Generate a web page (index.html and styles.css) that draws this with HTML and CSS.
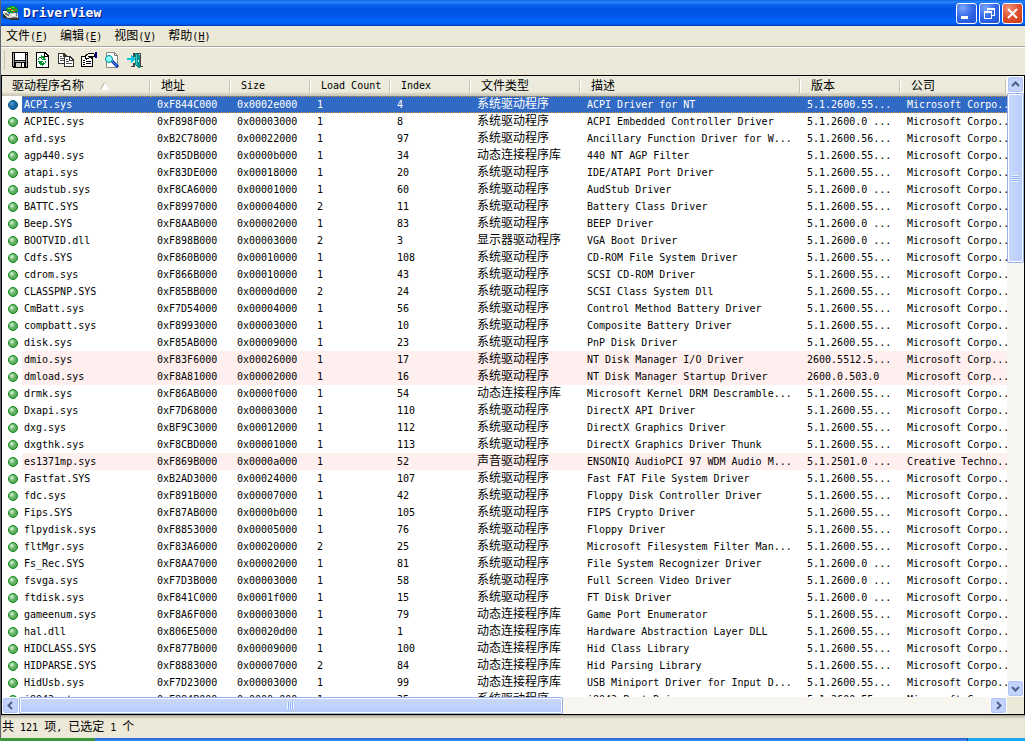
FILE: index.html
```html
<!DOCTYPE html>
<html lang="zh-CN">
<head>
<meta charset="utf-8">
<title>DriverView</title>
<link rel="stylesheet" href="styles.css">
</head>
<body>
<main class="window">
  <header class="titlebar">
    <svg class="app-icon" viewBox="0 0 16 16" shape-rendering="crispEdges" aria-hidden="true">
      <path fill="#333" d="M0 5h3v8h-3zM3 9h4v5h-4zM7 13h9v2h-9z"/>
      <path fill="#d8d8c8" d="M0 6h3l4 4v3h-3l-4-5zM7 8h8v5h-8z"/>
      <path fill="#777" d="M2 8h2v1h2v2h-2v-1h-2zM9 12h5v1h-5zM13 8h1v3h-1z"/>
      <path fill="#1c9a1c" d="M4 2h3v-1h5v1h2v2h1v3h-3v1h-5v-1h-3v-2h-1v-2h1z"/>
      <path fill="#7fe04a" d="M5 3h3v1h-3zM9 2h2v1h-2zM8 5h3v1h-3z"/>
      <path fill="#e02020" d="M7 4h2v1h-2zM11 4h1v1h-1zM10 6h2v1h-2z"/>
      <path fill="#fff" d="M1 6h2v1h-2zM9 9h3v2h-3z"/>
    </svg>
    <h1 class="title">DriverView</h1>
    <div class="window-buttons">
      <button class="win-btn" aria-label="最小化"><svg viewBox="0 0 19 19"><path fill="#fff" d="M4 12h7v3h-7z"/></svg></button>
      <button class="win-btn" aria-label="还原"><svg viewBox="0 0 19 19" shape-rendering="crispEdges"><path fill="#fff" d="M7 4h8v2h-8zM14 6h1v6h-1zM12 11h2v1h-2zM7 6h1v1h-1zM4 7h8v2h-8zM4 9h1v6h-1zM11 9h1v6h-1zM5 14h6v1h-6z"/></svg></button>
      <button class="win-btn close" aria-label="关闭"><svg viewBox="0 0 19 19"><path stroke="#fff" stroke-width="2" d="M5 5l9 9M14 5l-9 9"/></svg></button>
    </div>
  </header>
  <nav class="menu">
    <button><span class="cjk">文件</span>(<u>F</u>)</button>
    <button><span class="cjk">编辑</span>(<u>E</u>)</button>
    <button><span class="cjk">视图</span>(<u>V</u>)</button>
    <button><span class="cjk">帮助</span>(<u>H</u>)</button>
  </nav>
  <div class="toolbar">
    <button aria-label="保存"><svg viewBox="0 0 16 16" shape-rendering="crispEdges"><path d="M0 0h16v16h-15l-1-1z"/><path fill="#a8a8a0" d="M1 1h1v13h-1zM14 3h1v12h-1zM3 9h10v1h-10z"/><path fill="#fff" d="M3 1h10v7h-10zM10 11h2v4h-2z"/><path fill="#d8d8d0" d="M4 11h5v4h-5zM14 1h1v1h-1z"/></svg></button>
    <button aria-label="刷新"><svg viewBox="0 0 16 16" shape-rendering="crispEdges"><path d="M1 0h9l4 4v12h-13z"/><path fill="#fff" d="M2 1h7v4h4v10h-11zM10 2l2 2h-2z"/><path fill="#009030" d="M6 3h1v1h2v1h1v2h1v1h-4v-1h1v-1h-1v1h-1v-1h-1v-1h1zM4 5h1v1h-1v2h-1v-2h1zM4 9h4v1h-1v1h1v-1h1v1h1v1h-1v1h-1v1h-1v-1h-2v-1h-1v-2h-1v-1h1zM10 9h1v2h-1z"/></svg></button>
    <button aria-label="复制"><svg viewBox="0 0 16 16" shape-rendering="crispEdges"><path fill="#333" d="M0 1h6l3 3v8h-9z"/><path fill="#fff" d="M1 2h4v3h3v6h-7z"/><path fill="#555" d="M2 4h2v1h-2zM2 6h4v1h-4zM2 8h4v1h-4z"/><path fill="#333" d="M6 4h6l4 4v7h-10z"/><path fill="#fff" d="M7 5h4v4h4v5h-8zM12 6l2 2h-2z"/><path fill="#555" d="M8 7h2v1h-2zM8 9h3v1h-3zM8 11h6v1h-6z"/></svg></button>
    <button aria-label="属性"><svg viewBox="0 0 16 16" shape-rendering="crispEdges"><path d="M0 4h4v-1h1v-1h2v-1h6v1h1v3h-2v10h-12z"/><path fill="#fff" d="M1 5h3v2h1v1h1v-1h2v-1h2v1h1v7h-10zM6 3h1v-1h6v2h-3v1h-2v1h-3v-2h1z"/><path d="M2 8h2v1h-2zM5 9h5v1h-5zM2 10h2v1h-2zM5 11h5v1h-5zM2 12h2v1h-2zM7 4h3v1h-3z"/><path fill="#000080" d="M14 0h2v6h-2z"/></svg></button>
    <button aria-label="查找"><svg viewBox="0 0 16 16"><path fill="#fff" stroke="#888" d="M2.500 .5h8l3 3v12h-11z"/><path fill="none" stroke="#777" d="M10.500 .5v3h3"/><circle cx="5" cy="7" r="3.500" fill="#8ff" stroke="#088"/><path d="M8 9l6 6" stroke="#0030a8" stroke-width="3"/><path d="M8 9l5 5" stroke="#60a0ff"/></svg></button>
    <button aria-label="退出"><svg viewBox="0 0 16 16" shape-rendering="crispEdges"><path fill="#444" d="M6 1h8v13h2v1h-4v-1h1v-12h-5v3h-2zM6 11h2v4h-4v-1h2z"/><path fill="#009090" d="M8 1h1l4 2v13h-1l-4-3z"/><path fill="#40c8c8" d="M9 3h1v10h-1z"/><path fill="#fff" d="M11 8h1v2h-1z"/><path fill="#00c8e0" d="M0 6h4v-3h1l3 4-3 4h-1v-3h-4z"/></svg></button>
  </div>
  <section class="list">
    <div class="viewport">
      <table>
        <colgroup><col class="c-state"><col class="c-name"><col class="c-short"><col class="c-short"><col class="c-short"><col class="c-short"><col class="c-type"><col class="c-desc"><col class="c-ver"><col></colgroup>
        <thead><tr><th colspan="2" class="cjk">驱动程序名称<svg class="sort" viewBox="0 0 9 8"><path fill="#fff" d="M4.500 0L9 8H0z"/><path fill="none" stroke="#aca899" d="M4.500 .5L.5 7.500"/></svg></th><th class="cjk">地址</th><th>Size</th><th>Load Count</th><th>Index</th><th class="cjk">文件类型</th><th class="cjk">描述</th><th class="cjk">版本</th><th class="cjk">公司</th></tr></thead>
        <tbody>
<tr class="selected"><td><td>ACPI.sys<td>0xF844C000<td>0x0002e000<td>1<td>4<td>系统驱动程序<td>ACPI Driver for NT<td>5.1.2600.55...<td>Microsoft Corpo...
<tr><td><td>ACPIEC.sys<td>0xF898F000<td>0x00003000<td>1<td>8<td>系统驱动程序<td>ACPI Embedded Controller Driver<td>5.1.2600.0 ...<td>Microsoft Corpo...
<tr><td><td>afd.sys<td>0xB2C78000<td>0x00022000<td>1<td>97<td>系统驱动程序<td>Ancillary Function Driver for W...<td>5.1.2600.56...<td>Microsoft Corpo...
<tr><td><td>agp440.sys<td>0xF85DB000<td>0x0000b000<td>1<td>34<td>动态连接程序库<td>440 NT AGP Filter<td>5.1.2600.55...<td>Microsoft Corpo...
<tr><td><td>atapi.sys<td>0xF83DE000<td>0x00018000<td>1<td>20<td>系统驱动程序<td>IDE/ATAPI Port Driver<td>5.1.2600.55...<td>Microsoft Corpo...
<tr><td><td>audstub.sys<td>0xF8CA6000<td>0x00001000<td>1<td>60<td>系统驱动程序<td>AudStub Driver<td>5.1.2600.0 ...<td>Microsoft Corpo...
<tr><td><td>BATTC.SYS<td>0xF8997000<td>0x00004000<td>2<td>11<td>系统驱动程序<td>Battery Class Driver<td>5.1.2600.55...<td>Microsoft Corpo...
<tr><td><td>Beep.SYS<td>0xF8AAB000<td>0x00002000<td>1<td>83<td>系统驱动程序<td>BEEP Driver<td>5.1.2600.0 ...<td>Microsoft Corpo...
<tr><td><td>BOOTVID.dll<td>0xF898B000<td>0x00003000<td>2<td>3<td>显示器驱动程序<td>VGA Boot Driver<td>5.1.2600.0 ...<td>Microsoft Corpo...
<tr><td><td>Cdfs.SYS<td>0xF860B000<td>0x00010000<td>1<td>108<td>系统驱动程序<td>CD-ROM File System Driver<td>5.1.2600.55...<td>Microsoft Corpo...
<tr><td><td>cdrom.sys<td>0xF866B000<td>0x00010000<td>1<td>43<td>系统驱动程序<td>SCSI CD-ROM Driver<td>5.1.2600.55...<td>Microsoft Corpo...
<tr><td><td>CLASSPNP.SYS<td>0xF85BB000<td>0x0000d000<td>2<td>24<td>系统驱动程序<td>SCSI Class System Dll<td>5.1.2600.55...<td>Microsoft Corpo...
<tr><td><td>CmBatt.sys<td>0xF7D54000<td>0x00004000<td>1<td>56<td>系统驱动程序<td>Control Method Battery Driver<td>5.1.2600.55...<td>Microsoft Corpo...
<tr><td><td>compbatt.sys<td>0xF8993000<td>0x00003000<td>1<td>10<td>系统驱动程序<td>Composite Battery Driver<td>5.1.2600.55...<td>Microsoft Corpo...
<tr><td><td>disk.sys<td>0xF85AB000<td>0x00009000<td>1<td>23<td>系统驱动程序<td>PnP Disk Driver<td>5.1.2600.55...<td>Microsoft Corpo...
<tr class="marked"><td><td>dmio.sys<td>0xF83F6000<td>0x00026000<td>1<td>17<td>系统驱动程序<td>NT Disk Manager I/O Driver<td>2600.5512.5...<td>Microsoft Corp...
<tr class="marked"><td><td>dmload.sys<td>0xF8A81000<td>0x00002000<td>1<td>16<td>系统驱动程序<td>NT Disk Manager Startup Driver<td>2600.0.503.0<td>Microsoft Corp...
<tr><td><td>drmk.sys<td>0xF86AB000<td>0x0000f000<td>1<td>54<td>动态连接程序库<td>Microsoft Kernel DRM Descramble...<td>5.1.2600.55...<td>Microsoft Corpo...
<tr><td><td>Dxapi.sys<td>0xF7D68000<td>0x00003000<td>1<td>110<td>系统驱动程序<td>DirectX API Driver<td>5.1.2600.55...<td>Microsoft Corpo...
<tr><td><td>dxg.sys<td>0xBF9C3000<td>0x00012000<td>1<td>112<td>系统驱动程序<td>DirectX Graphics Driver<td>5.1.2600.55...<td>Microsoft Corpo...
<tr><td><td>dxgthk.sys<td>0xF8CBD000<td>0x00001000<td>1<td>113<td>系统驱动程序<td>DirectX Graphics Driver Thunk<td>5.1.2600.55...<td>Microsoft Corpo...
<tr class="marked"><td><td>es1371mp.sys<td>0xF869B000<td>0x0000a000<td>1<td>52<td>声音驱动程序<td>ENSONIQ AudioPCI 97 WDM Audio M...<td>5.1.2501.0 ...<td>Creative Techno...
<tr><td><td>Fastfat.SYS<td>0xB2AD3000<td>0x00024000<td>1<td>107<td>系统驱动程序<td>Fast FAT File System Driver<td>5.1.2600.55...<td>Microsoft Corpo...
<tr><td><td>fdc.sys<td>0xF891B000<td>0x00007000<td>1<td>42<td>系统驱动程序<td>Floppy Disk Controller Driver<td>5.1.2600.55...<td>Microsoft Corpo...
<tr><td><td>Fips.SYS<td>0xF87AB000<td>0x0000b000<td>1<td>105<td>系统驱动程序<td>FIPS Crypto Driver<td>5.1.2600.55...<td>Microsoft Corpo...
<tr><td><td>flpydisk.sys<td>0xF8853000<td>0x00005000<td>1<td>76<td>系统驱动程序<td>Floppy Driver<td>5.1.2600.55...<td>Microsoft Corpo...
<tr><td><td>fltMgr.sys<td>0xF83A6000<td>0x00020000<td>2<td>25<td>系统驱动程序<td>Microsoft Filesystem Filter Man...<td>5.1.2600.55...<td>Microsoft Corpo...
<tr><td><td>Fs_Rec.SYS<td>0xF8AA7000<td>0x00002000<td>1<td>81<td>系统驱动程序<td>File System Recognizer Driver<td>5.1.2600.0 ...<td>Microsoft Corpo...
<tr><td><td>fsvga.sys<td>0xF7D3B000<td>0x00003000<td>1<td>58<td>系统驱动程序<td>Full Screen Video Driver<td>5.1.2600.0 ...<td>Microsoft Corpo...
<tr><td><td>ftdisk.sys<td>0xF841C000<td>0x0001f000<td>1<td>15<td>系统驱动程序<td>FT Disk Driver<td>5.1.2600.0 ...<td>Microsoft Corpo...
<tr><td><td>gameenum.sys<td>0xF8A6F000<td>0x00003000<td>1<td>79<td>动态连接程序库<td>Game Port Enumerator<td>5.1.2600.55...<td>Microsoft Corpo...
<tr><td><td>hal.dll<td>0x806E5000<td>0x00020d00<td>1<td>1<td>动态连接程序库<td>Hardware Abstraction Layer DLL<td>5.1.2600.55...<td>Microsoft Corpo...
<tr><td><td>HIDCLASS.SYS<td>0xF877B000<td>0x00009000<td>1<td>100<td>动态连接程序库<td>Hid Class Library<td>5.1.2600.55...<td>Microsoft Corpo...
<tr><td><td>HIDPARSE.SYS<td>0xF8883000<td>0x00007000<td>2<td>84<td>动态连接程序库<td>Hid Parsing Library<td>5.1.2600.55...<td>Microsoft Corpo...
<tr><td><td>HidUsb.sys<td>0xF7D23000<td>0x00003000<td>1<td>99<td>动态连接程序库<td>USB Miniport Driver for Input D...<td>5.1.2600.55...<td>Microsoft Corpo...
<tr><td><td>i8042prt.sys<td>0xF884B000<td>0x0000c000<td>1<td>35<td>系统驱动程序<td>i8042 Port Driver<td>5.1.2600.55...<td>Microsoft Corpo...
        </tbody>
      </table>
    </div>
    <div class="scroll vertical">
      <button class="arrow" aria-label="向上"><svg viewBox="0 0 15 15"><path d="M4 9l3.500-3.500 3.500 3.500"/></svg></button>
      <div class="track"><div class="thumb"><span class="grip"></span></div></div>
      <button class="arrow" aria-label="向下"><svg viewBox="0 0 15 15"><path d="M4 6l3.500 3.500 3.500-3.500"/></svg></button>
    </div>
    <div class="scroll horizontal">
      <button class="arrow" aria-label="向左"><svg viewBox="0 0 15 15"><path d="M9 4l-3.500 3.500 3.500 3.500"/></svg></button>
      <div class="track"><div class="thumb"><span class="grip"></span></div></div>
      <button class="arrow" aria-label="向右"><svg viewBox="0 0 15 15"><path d="M6 4l3.500 3.500-3.500 3.500"/></svg></button>
    </div>
  </section>
  <footer class="status"><span class="cjk">共</span> 121 <span class="cjk">项</span>, <span class="cjk">已选定</span> 1 <span class="cjk">个</span></footer>
</main>
<div class="taskbar"><span class="start"></span><span class="tray"></span></div>
</body>
</html>
```
FILE: styles.css
```css
*, *::before { box-sizing: border-box; }

body {
  margin: 0;
  height: 100vh;
  display: flex;
  flex-direction: column;
  overflow: hidden;
  background: #ece9d8;
  color: #000;
  font: 10px/16px "DejaVu Sans Mono", "Noto Sans CJK SC", monospace;
}

button {
  border: 0;
  padding: 0;
  background: none;
  font: inherit;
  color: inherit;
}

svg { display: block; }

.cjk { font-size: 12px; }

.window {
  flex: 1;
  min-height: 0;
  display: flex;
  flex-direction: column;
  border-left: 1px solid #5c6470;
}

.titlebar {
  display: flex;
  align-items: center;
  height: 26px;
  padding: 0 2px;
  background: linear-gradient(#0c62e8 0, #2a86fb 2px, #0860ee 5px, #0054e3 9px, #0058ea 16px, #0066ff 21px, #0060fa 23px, #0040b8 26px);
}

.app-icon { width: 16px; height: 16px; }

.title {
  flex: 1;
  margin: 0 0 0 4px;
  color: #fff;
  font-size: 13px;
  line-height: 20px;
  text-shadow: 1px 1px #0a1883;
}

.window-buttons { display: flex; gap: 2px; }

.win-btn {
  width: 21px;
  height: 21px;
  border: 1px solid #fff;
  border-radius: 3px;
  background: radial-gradient(circle at 30% 20%, #7ca4f8, #3068e8 50%, #2050d0);
}

.win-btn svg { width: 19px; height: 19px; }
.win-btn.close { background: radial-gradient(circle at 30% 20%, #f09078, #e05030 50%, #c83810); }

.menu {
  display: flex;
  height: 20px;
  align-items: center;
}

.menu button { padding: 0 6px; white-space: nowrap; }
.menu button:first-child { padding-left: 5px; }

.toolbar {
  display: flex;
  align-items: center;
  height: 29px;
  padding: 0 0 3px 3px;
  border-top: 1px solid #aca899;
  box-shadow: inset 0 1px #fff;
}

.toolbar::before {
  content: "";
  width: 1px;
  height: 20px;
  margin-right: 3px;
  background: #c5c2b2;
}

.toolbar button { padding: 3px 3px 3px 4px; }
.toolbar svg { width: 16px; height: 16px; }

.list {
  flex: 1;
  min-height: 0;
  display: grid;
  grid-template-columns: minmax(0, 1fr) 17px;
  grid-template-rows: minmax(0, 1fr) 17px;
  border: 1px solid #000;
}

.viewport { overflow: hidden; background: #fff; }

table {
  width: 100%;
  table-layout: fixed;
  border-collapse: collapse;
}

.c-state { width: 20px; }
.c-name { width: 129px; }
.c-short { width: 80px; }
.c-type { width: 110px; }
.c-desc { width: 220px; }
.c-ver { width: 100px; }

th {
  height: 20px;
  padding: 0 0 0 10px;
  background:
    linear-gradient(#fff, #fff) right 0 top 3px / 1px 14px no-repeat,
    linear-gradient(#c7c5b2, #c7c5b2) right 1px top 3px / 1px 14px no-repeat,
    linear-gradient(#ebeadb 16px, #e2decd 17px, #d6d2c2 18px, #cbc7b8 20px);
  font-weight: 400;
  text-align: left;
  white-space: nowrap;
}

.sort {
  display: inline-block;
  width: 9px;
  height: 8px;
  margin-left: 16px;
}

td {
  height: 17px;
  padding: 0 0 0 6px;
  overflow: hidden;
  white-space: nowrap;
  line-height: 17px;
}

td:nth-child(2) { padding-left: 2px; }
td:nth-child(7) { font-size: 12px; }

td:first-child::before {
  content: "";
  display: block;
  width: 10px;
  height: 10px;
  border: 1px solid #0a8a1c;
  border-radius: 50%;
  background: radial-gradient(circle at 35% 35%, #e0f4e0, #6cb86c 40%, #4c944c);
}

.marked td:not(:first-child) { background: #ffefef; }

.selected td:not(:first-child) {
  color: #fff;
  background:
    repeating-linear-gradient(90deg, #ce953a 0 1px, #316ac5 1px 2px) top / 100% 1px no-repeat,
    repeating-linear-gradient(90deg, #ce953a 0 1px, #316ac5 1px 2px) bottom / 100% 1px no-repeat,
    #316ac5;
}

.selected td:first-child::before {
  border-color: #0c5c80;
  background: radial-gradient(circle at 35% 35%, #5aa0d8, #1c6cb0 40%, #105888);
}

.scroll { display: flex; background: #f6f5f0; }
.vertical { flex-direction: column; }

.arrow {
  flex: none;
  width: 17px;
  height: 17px;
  border: 1px solid #fff;
  border-radius: 3px;
  background: #c3d3fd;
  box-shadow: inset 0 0 0 1px #b0c4f4;
}

.arrow svg { width: 15px; height: 15px; }
.arrow path { fill: none; stroke: #4d6185; stroke-width: 2; }

.track { flex: 1; min-width: 0; min-height: 0; }

.thumb {
  display: flex;
  align-items: center;
  justify-content: center;
  border: 1px solid #98b0e8;
  border-radius: 2px;
  box-shadow: inset 0 0 0 1px #fff;
}

.vertical .thumb { height: 29%; background: linear-gradient(90deg, #c9d8fc, #bccffc 80%, #b0c6f4); }
.horizontal .thumb { width: 56%; height: 17px; background: linear-gradient(#c9d8fc, #bccffc 80%, #b0c6f4); }

.grip { width: 7px; height: 7px; }
.vertical .grip { background: repeating-linear-gradient(#eef4fe 0 1px, #8cb0f8 1px 2px); }
.horizontal .grip { background: repeating-linear-gradient(90deg, #eef4fe 0 1px, #8cb0f8 1px 2px); }

.status {
  height: 23px;
  padding-left: 1px;
  border-top: 1px solid #aca899;
  box-shadow: inset 0 2px 2px #c8c5b4;
  line-height: 23px;
  white-space: pre;
}

.taskbar {
  display: flex;
  justify-content: space-between;
  height: 3px;
  background: linear-gradient(#2060d8, #4090f0);
}

.start { width: 95px; background: #3c9a3c; }
.tray { width: 58px; border-left: 1px solid #104a90; background: #18a8f0; }
```
